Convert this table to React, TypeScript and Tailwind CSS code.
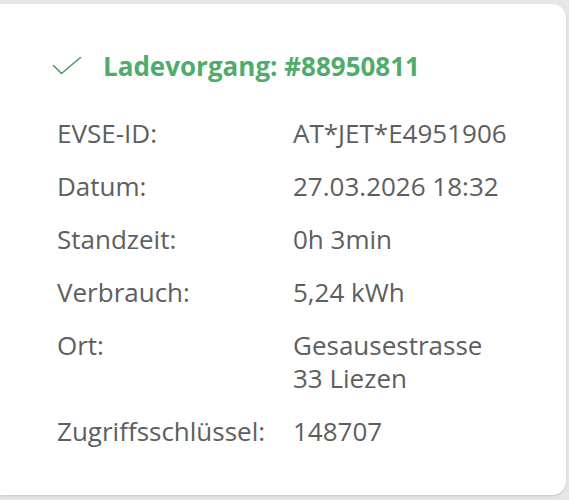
import React from "react";

const rows: { label: string; value: string[] }[] = [
  { label: "EVSE-ID:", value: ["AT*JET*E4951906"] },
  { label: "Datum:", value: ["27.03.2026 18:32"] },
  { label: "Standzeit:", value: ["0h 3min"] },
  { label: "Verbrauch:", value: ["5,24 kWh"] },
  { label: "Ort:", value: ["Gesausestrasse", "33 Liezen"] },
  { label: "Zugriffsschlüssel:", value: ["148707"] },
];

const App = () => {
  return (
    <div
      className="w-[569px] h-[500px] bg-[#e6e6e6] pt-[4px] pb-[5px] overflow-hidden"
      style={{ fontFamily: '"Open Sans", "Noto Sans", sans-serif' }}
    >
      <div className="w-[566px] h-full bg-white rounded-r-[14px] shadow-sm">
        <div className="flex items-center pl-[52px] pt-[44px]">
          <svg width="30" height="20" viewBox="0 0 30 20" fill="none">
            <path
              d="M1.5 9.5 L9.5 17.5 L28.5 1.5"
              stroke="#4a9a62"
              strokeWidth="1.6"
              strokeLinecap="round"
              strokeLinejoin="round"
            />
          </svg>
          <h1 className="ml-[21px] text-[26px] font-bold text-[#4fac6c] leading-[36px]">
            Ladevorgang: #88950811
          </h1>
        </div>
        <div className="grid grid-cols-[236px_1fr] gap-y-[20px] pl-[57px] pt-[33px] text-[26px] leading-[33px] text-[#5e5e5e]">
          {rows.map((row) => (
            <React.Fragment key={row.label}>
              <div>{row.label}</div>
              <div>
                {row.value.map((line) => (
                  <div key={line}>{line}</div>
                ))}
              </div>
            </React.Fragment>
          ))}
        </div>
      </div>
    </div>
  );
};

export default App;
